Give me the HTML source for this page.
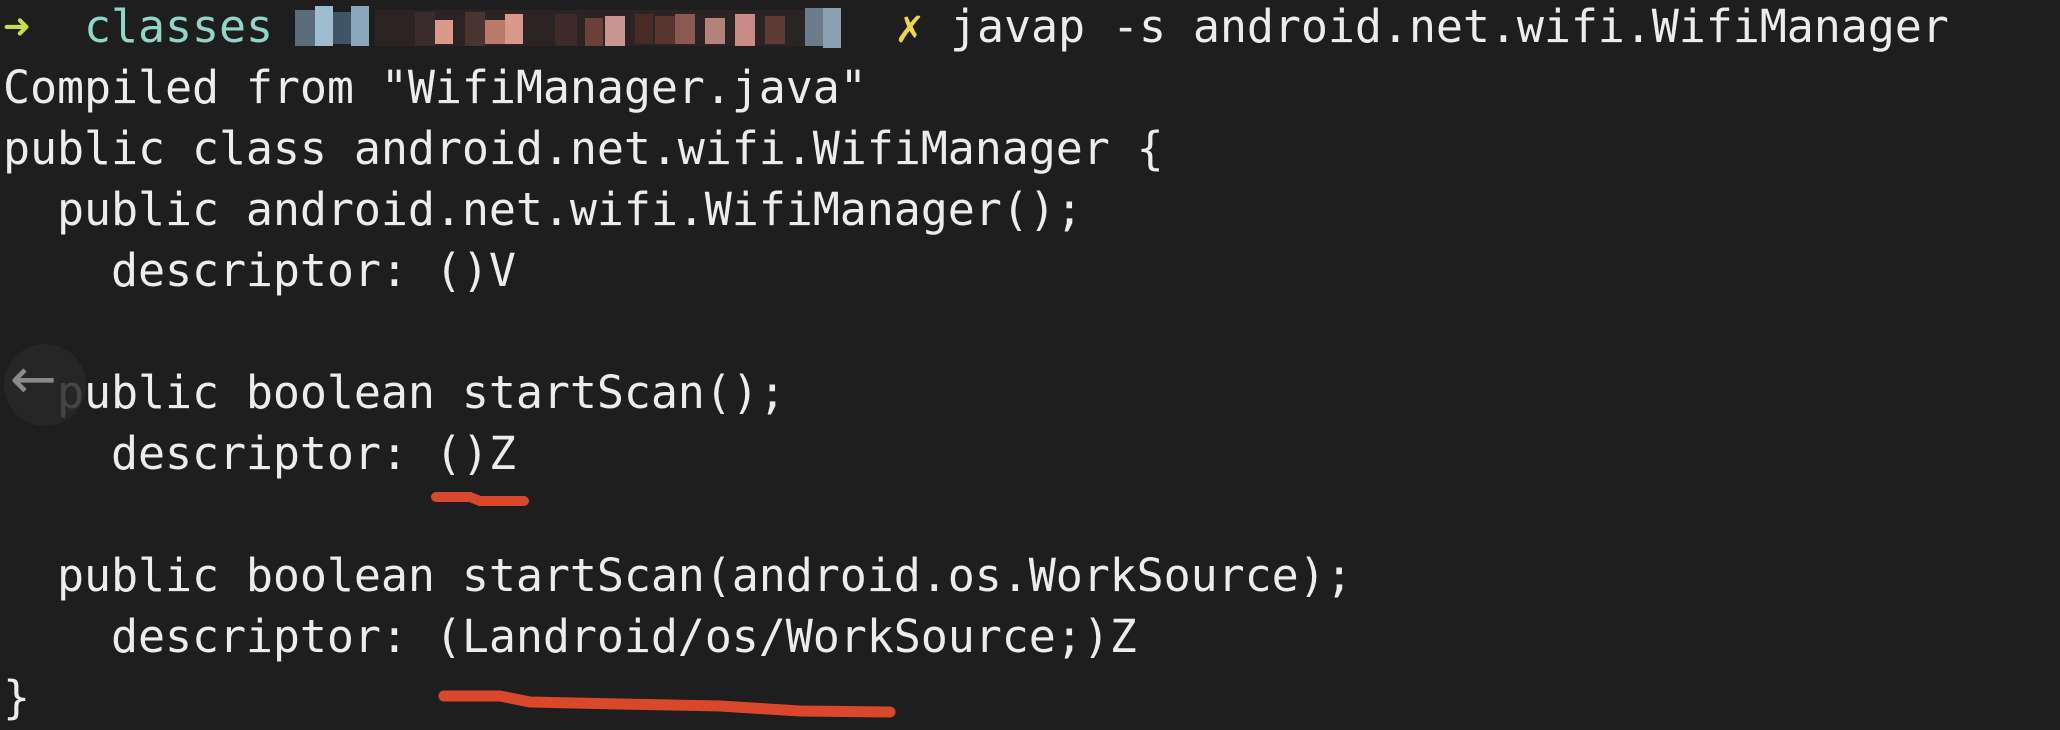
<!DOCTYPE html>
<html><head><meta charset="utf-8"><style>
html,body{margin:0;padding:0;background:#1e1e1e;width:2060px;height:730px;overflow:hidden;position:relative}
.l{position:absolute;left:3px;height:61px;line-height:61px;font-family:"DejaVu Sans Mono","Liberation Mono",monospace;font-size:45px;color:#ececec;white-space:pre;letter-spacing:-0.1px}
.b{position:absolute}
</style></head><body>
<div class="l" style="top:-4px"><span style="color:#c8dc4c">➜</span>  <span style="color:#8fd6c8">classes</span></div>
<div style="position:absolute;left:295px;top:6px;width:570px;height:42px">
<div class="b" style="left:80px;top:4px;width:440px;height:36px;background:#2a2424"></div>
<div class="b" style="left:0;top:4px;width:20px;height:36px;background:#5a6c7c"></div>
<div class="b" style="left:20px;top:0;width:18px;height:40px;background:#9fbbd0"></div>
<div class="b" style="left:38px;top:6px;width:18px;height:32px;background:#3f5566"></div>
<div class="b" style="left:56px;top:0;width:18px;height:40px;background:#8aa6bb"></div>
<div class="b" style="left:120px;top:6px;width:20px;height:34px;background:#3a2c2c"></div>
<div class="b" style="left:140px;top:14px;width:18px;height:24px;background:#d99a8a"></div>
<div class="b" style="left:170px;top:6px;width:20px;height:34px;background:#4a3430"></div>
<div class="b" style="left:190px;top:14px;width:20px;height:24px;background:#b87a6a"></div>
<div class="b" style="left:210px;top:8px;width:18px;height:30px;background:#d9998a"></div>
<div class="b" style="left:260px;top:8px;width:22px;height:32px;background:#3e2a28"></div>
<div class="b" style="left:290px;top:12px;width:18px;height:28px;background:#6a4038"></div>
<div class="b" style="left:310px;top:10px;width:20px;height:30px;background:#c89590"></div>
<div class="b" style="left:340px;top:8px;width:18px;height:30px;background:#4a2a26"></div>
<div class="b" style="left:360px;top:10px;width:20px;height:28px;background:#5a3430"></div>
<div class="b" style="left:380px;top:8px;width:20px;height:30px;background:#8a5a52"></div>
<div class="b" style="left:410px;top:12px;width:20px;height:26px;background:#b48278"></div>
<div class="b" style="left:440px;top:8px;width:20px;height:32px;background:#c88c84"></div>
<div class="b" style="left:470px;top:10px;width:20px;height:28px;background:#5e3a34"></div>
<div class="b" style="left:510px;top:2px;width:18px;height:38px;background:#6a7c8c"></div>
<div class="b" style="left:528px;top:2px;width:18px;height:40px;background:#8aa0b0"></div>
</div>
<div class="l" style="top:-4px;left:896px"><span style="color:#ecd44c">✗</span> javap -s android.net.wifi.WifiManager</div>
<div class="l" style="top:57px">Compiled from "WifiManager.java"</div>
<div class="l" style="top:118px">public class android.net.wifi.WifiManager {</div>
<div class="l" style="top:179px">  public android.net.wifi.WifiManager();</div>
<div class="l" style="top:240px">    descriptor: ()V</div>
<div class="l" style="top:362px">  public boolean startScan();</div>
<div class="l" style="top:423px">    descriptor: ()Z</div>
<div class="l" style="top:545px">  public boolean startScan(android.os.WorkSource);</div>
<div class="l" style="top:606px">    descriptor: (Landroid/os/WorkSource;)Z</div>
<div class="l" style="top:667px">}</div>
<div style="position:absolute;left:4px;top:344px;width:82px;height:82px;border-radius:50%;background:rgba(40,40,40,0.85)"></div>
<div style="position:absolute;left:10px;top:350px;font:56px 'DejaVu Sans',sans-serif;color:#8a8a8a;line-height:60px">←</div>
<svg style="position:absolute;left:0;top:0" width="2060" height="730">
<path d="M436 497 L470 497 L480 501 L524 501" stroke="#d9482a" stroke-width="10" fill="none" stroke-linecap="round"/>
<path d="M444 696 L500 696 L530 702 L620 704 L720 706 L800 711 L890 712" stroke="#d9482a" stroke-width="11" fill="none" stroke-linecap="round"/>
</svg>
</body></html>
